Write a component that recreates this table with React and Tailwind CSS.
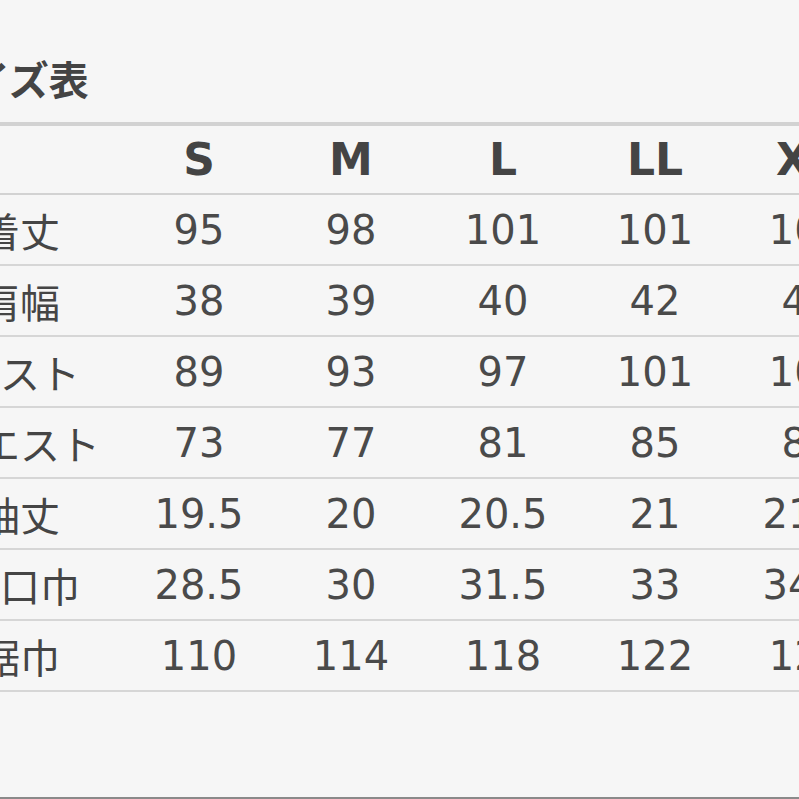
const sizes = ["S", "M", "L", "LL", "XL"];

const rows = [
  { label: "着丈", values: ["95", "98", "101", "101", "104"] },
  { label: "肩幅", values: ["38", "39", "40", "42", "44"] },
  { label: "バスト", values: ["89", "93", "97", "101", "105"] },
  { label: "ウエスト", values: ["73", "77", "81", "85", "89"] },
  { label: "袖丈", values: ["19.5", "20", "20.5", "21", "21.5"] },
  { label: "袖口巾", values: ["28.5", "30", "31.5", "33", "34.5"] },
  { label: "裾巾", values: ["110", "114", "118", "122", "126"] },
];

const font = "font-['DejaVu_Sans','Noto_Sans_CJK_JP',sans-serif]";

const App = () => {
  return (
    <div className={`w-[799px] h-[799px] overflow-hidden bg-[#f6f6f6] text-[#454545] flex flex-col ${font}`}>
      <div className="-ml-[83px] w-[966px] flex flex-col">
        {/* Title */}
        <div className="h-[122px] pt-[58px] pl-[13px]">
          <h2 className="text-[40px] leading-none font-bold font-['Noto_Sans_CJK_JP',sans-serif] text-[#444]">
            サイズ表
          </h2>
        </div>

        {/* Header row */}
        <div className="grid grid-cols-[206px_repeat(5,152px)] h-[73px] border-t-4 border-b-2 border-[#d2d2d2]">
          <div />
          {sizes.map((s) => (
            <div key={s} className="flex items-center justify-center text-[44px] font-bold leading-none text-[#444]">
              {s}
            </div>
          ))}
        </div>

        {/* Data rows */}
        {rows.map((row) => (
          <div
            key={row.label}
            className="grid grid-cols-[206px_repeat(5,152px)] h-[71px] border-b-2 border-[#d6d6d6]"
          >
            <div className="flex items-center justify-center text-[40px] leading-none font-['Noto_Sans_CJK_JP',sans-serif]">
              {row.label}
            </div>
            {row.values.map((v, i) => (
              <div key={i} className="flex items-center justify-center text-[40px] leading-none text-[#4a4a4a]">
                {v}
              </div>
            ))}
          </div>
        ))}
      </div>

      {/* Empty space to the bottom edge */}
      <div className="flex-1 border-b-2 border-[#8a8a8a]" />
    </div>
  );
};

export default App;
